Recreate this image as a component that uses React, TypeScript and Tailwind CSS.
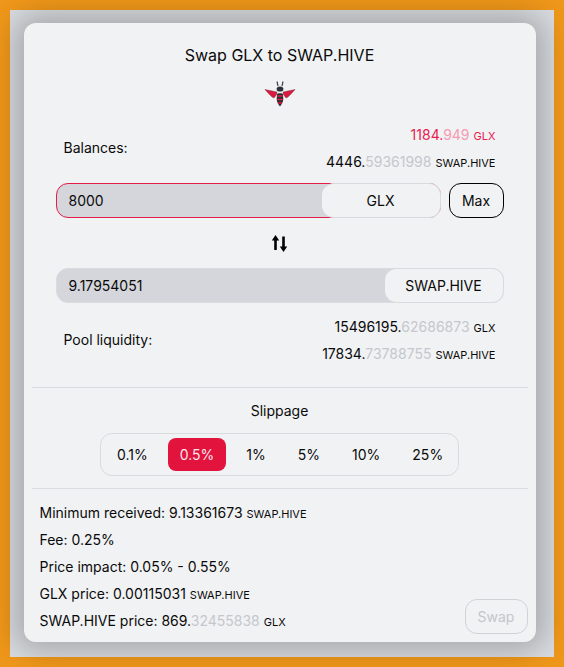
import React from "react";

const Amount = ({ whole, frac, unit, muted = "text-[#c4c8cc]", className = "" }: { whole: string; frac?: string; unit: string; muted?: string; className?: string }) => (
  <div className={`h-[27px] leading-[27px] ${className}`}>
    {whole}
    {frac && <span className={muted}>{frac}</span>}
    <span className="ml-1 text-[11px]">{unit}</span>
  </div>
);

const Bee = () => (
  <svg width="32" height="28" viewBox="0 0 32 28" className="block">
    <path d="M13 1.5 L14 6 M19 1.5 L18 6" stroke="#3f444c" strokeWidth="1.2" fill="none" />
    <ellipse cx="16" cy="9" rx="3.4" ry="2.6" fill="#2b2f36" />
    <path d="M1 9.5 L13 12 L12.5 14.5 L10 18 L8 17 L4.5 13.5 Z" fill="#dc1a40" stroke="#5b2a35" strokeWidth="0.4" />
    <path d="M31 9.5 L19 12 L19.5 14.5 L22 18 L24 17 L27.5 13.5 Z" fill="#dc1a40" stroke="#5b2a35" strokeWidth="0.4" />
    <path d="M13 14 C13 13 19 13 19 14 L19.3 19 C19.3 22 17.5 25 16 26.5 C14.5 25 12.7 22 12.7 19 Z" fill="#2b2f36" />
    <path d="M13.2 16 H18.8 M13.2 19.5 H18.8 M14 23 H18" stroke="#dc1a40" strokeWidth="1.7" />
  </svg>
);

const SwapArrows = () => (
  <svg width="18" height="18" viewBox="0 0 18 18" fill="#000" className="block">
    <path d="M4.5 0 L8.2 5.5 H5.8 V15 H3.2 V5.5 H0.8 Z" />
    <path d="M12.5 17 L8.8 11.5 H11.2 V1.5 H13.8 V11.5 H16.2 Z" />
  </svg>
);

const slippage = ["0.1%", "0.5%", "1%", "5%", "10%", "25%"];

export default function App() {
  return (
    <div className="h-[667px] w-[564px] border-[10px] border-[#ef971a] bg-[#d8dbdf] pl-[13.5px] pt-[13px] font-['Inter',sans-serif] text-sm text-[#0a0a0a]">
      <div className="relative h-[619px] w-[512px] rounded-xl bg-[#f1f2f4] shadow-[0_0_30px_8px_rgba(0,0,0,0.24)]">
        <div className="pt-[22px] text-center text-base leading-[20px]">Swap GLX to SWAP.HIVE</div>
        <div className="mt-[15px] flex justify-center">
          <Bee />
        </div>

        <div className="mt-[13px] flex items-center justify-between px-10">
          <div>Balances:</div>
          <div className="text-right">
            <Amount whole="1184." frac="949" unit="GLX" muted="text-[#f59ab2]" className="text-[#e9204f]" />
            <Amount whole="4446." frac="59361998" unit="SWAP.HIVE" />
          </div>
        </div>

        <div className="mt-[8px] flex gap-2 px-8">
          <div className="flex h-[35px] w-[385px] items-center justify-between rounded-xl border border-[#e11d48] bg-[#d4d6db] pl-3">
            <span>8000</span>
            <div className="-mr-px flex h-[35px] w-[119px] items-center justify-center rounded-xl border border-[#d9d9de] border-l-0 bg-[#f1f2f4]">GLX</div>
          </div>
          <button className="h-[35px] w-[55px] rounded-xl border border-black text-sm">Max</button>
        </div>

        <div className="mt-[17px] flex justify-center">
          <SwapArrows />
        </div>

        <div className="mt-[15px] px-8">
          <div className="flex h-[35px] w-[448px] items-center justify-between rounded-xl border border-[#d9dbdf] bg-[#d4d6db] pl-3">
            <span>9.17954051</span>
            <div className="-mr-px flex h-[35px] w-[119px] items-center justify-center rounded-xl border border-[#d9dbdf] border-l-0 bg-[#f1f2f4]">SWAP.HIVE</div>
          </div>
        </div>

        <div className="mt-[10px] flex items-center justify-between px-10">
          <div>Pool liquidity:</div>
          <div className="text-right">
            <Amount whole="15496195." frac="62686873" unit="GLX" />
            <Amount whole="17834." frac="73788755" unit="SWAP.HIVE" />
          </div>
        </div>

        <div className="mx-2 mt-[20px] border-t border-[#d9dbdf]" />

        <div className="mt-[13px] text-center leading-[20px]">Slippage</div>

        <div className="mt-[12px] flex justify-center">
          <div className="flex w-[359px] gap-2 rounded-xl border border-[#d9dbdf] p-1">
            {slippage.map((s) => (
              <button key={s} className={`h-[33px] rounded-lg px-3 ${s === "0.5%" ? "bg-[#e2133c] text-[#fbe9ee]" : ""}`}>
                {s}
              </button>
            ))}
          </div>
        </div>

        <div className="mx-2 mt-[12px] border-t border-[#d9dbdf]" />

        <div className="mt-[10px] px-4">
          <Amount whole="Minimum received: 9.13361673" unit="SWAP.HIVE" />
          <div className="h-[27px] leading-[27px]">Fee: 0.25%</div>
          <div className="h-[27px] leading-[27px]">Price impact: 0.05% - 0.55%</div>
          <Amount whole="GLX price: 0.00115031" unit="SWAP.HIVE" />
          <Amount whole="SWAP.HIVE price: 869." frac="32455838" unit="GLX" />
        </div>

        <button className="absolute bottom-2 right-2 h-[35px] w-[63px] rounded-xl border border-[#cfd2d6] text-[#c3c6cb]">Swap</button>
      </div>
    </div>
  );
}
